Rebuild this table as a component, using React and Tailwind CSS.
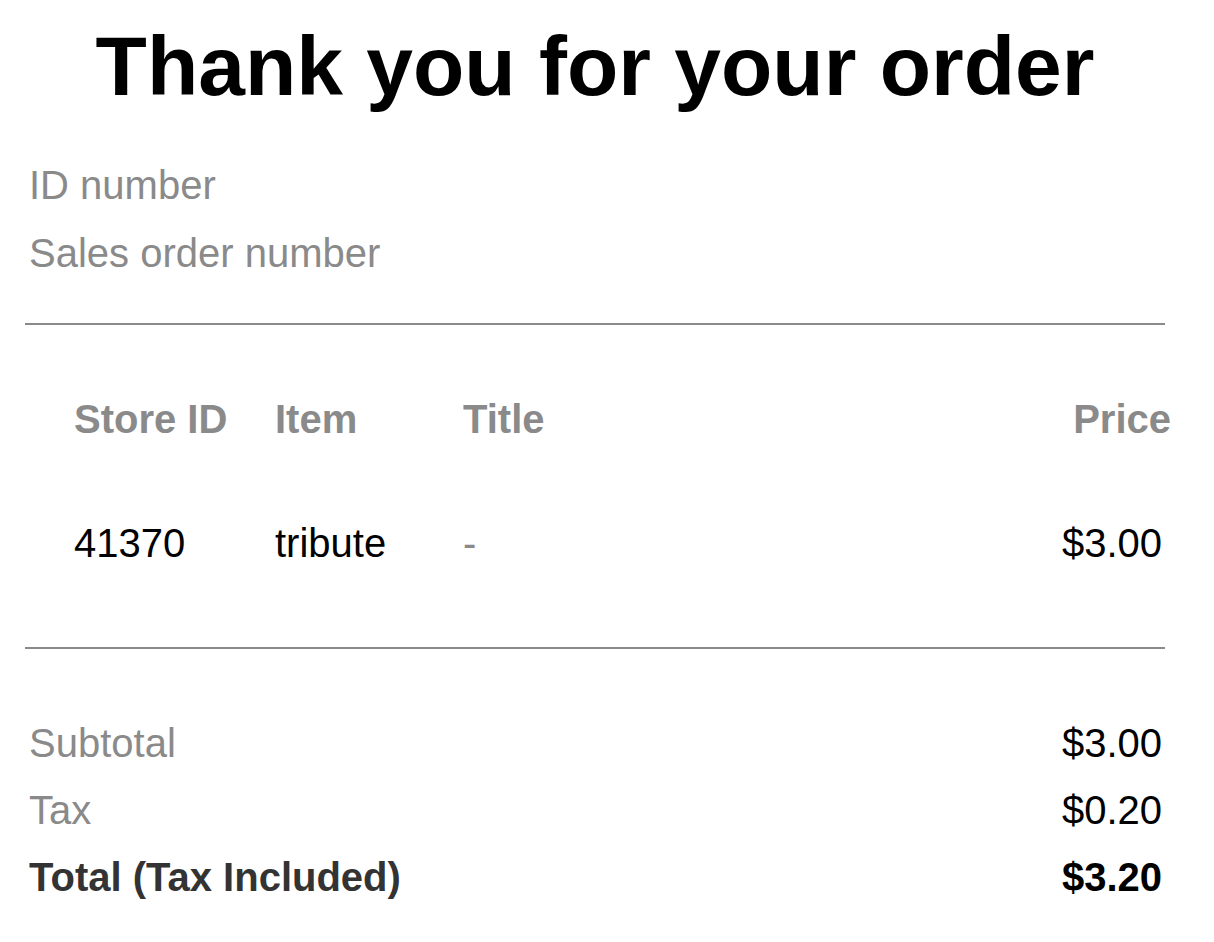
export default function App() {
  const gray = "text-[#8a8a8a]";
  return (
    <div
      className="min-h-screen w-full bg-white text-black"
      style={{ fontFamily: '"Liberation Sans", Arial, Helvetica, sans-serif' }}
    >
      <div className="ml-[25px] w-[1140px]">
        <h1 className="pt-[24px] text-center text-[84px] font-bold leading-none">
          Thank you for your order
        </h1>

        <div className={`mt-[43px] pl-[4px] text-[40px] leading-[68px] ${gray}`}>
          <div>ID number</div>
          <div>Sales order number</div>
        </div>

        <div className="mt-[36px] h-[2px] bg-[#8a8a8a]" />

        <div className="pt-[60px] text-[40px] leading-[68px]">
          <div className={`flex h-[68px] pl-[49px] font-bold ${gray}`}>
            <div className="w-[201px]">Store ID</div>
            <div className="w-[188px]">Item</div>
            <div className="flex-1">Title</div>
            <div className="mr-[-6px] text-right">Price</div>
          </div>
          <div className="mt-[56px] flex h-[68px] pl-[49px]">
            <div className="w-[201px]">41370</div>
            <div className="w-[188px]">tribute</div>
            <div className={`flex-1 ${gray}`}>-</div>
            <div className="pr-[3px] text-right">$3.00</div>
          </div>
        </div>

        <div className="mt-[70px] h-[2px] bg-[#8a8a8a]" />

        <div className="mt-[61px] pl-[4px] text-[40px] leading-[67px]">
          <div className="flex justify-between pr-[3px]">
            <span className={gray}>Subtotal</span>
            <span>$3.00</span>
          </div>
          <div className="flex justify-between pr-[3px]">
            <span className={gray}>Tax</span>
            <span>$0.20</span>
          </div>
          <div className="flex justify-between pr-[3px] font-bold">
            <span className="text-[#333333]">Total (Tax Included)</span>
            <span>$3.20</span>
          </div>
        </div>
      </div>
    </div>
  );
}
